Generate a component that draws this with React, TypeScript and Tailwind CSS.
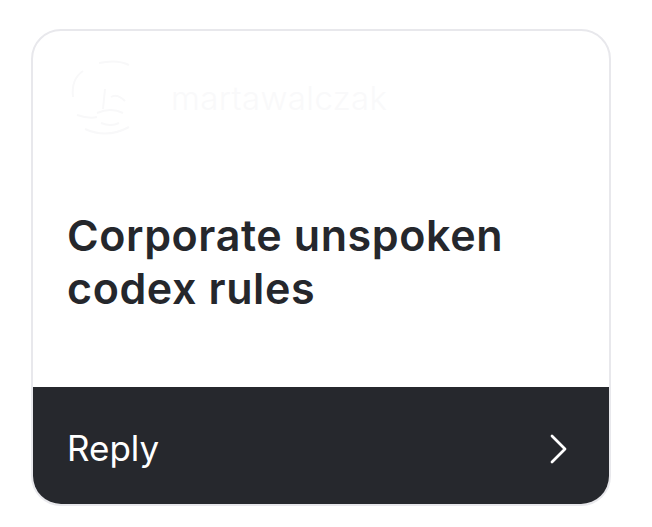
import React from "react";

export default function App() {
  return (
    <div className="min-h-[527px] w-[652px] bg-white pl-[31px] pt-[29px]" style={{ fontFamily: "Inter, 'Noto Sans', sans-serif" }}>
      <div className="flex h-[477px] w-[580px] flex-col overflow-hidden rounded-[30px] border-2 border-[#e8e8ec] bg-white">
        <div className="flex flex-1 flex-col px-[34px]">
          <div className="flex h-[128px] items-center gap-[20px] pt-[8px]">
            <svg width="84" height="84" viewBox="0 0 84 84" fill="none" stroke="#f8f8f9" strokeWidth="2">
              <path d="M32 6 Q50 2 62 8" />
              <path d="M6 40 Q4 22 16 14" />
              <path d="M18 72 Q40 82 62 70" />
              <path d="M38 32 L36 52 M30 56 Q44 50 56 56 M44 40 Q50 36 58 44" />
              <path d="M10 58 Q22 62 30 60" />
              <path d="M34 66 Q44 70 52 66" />
            </svg>
            <span className="text-[33px] font-light tracking-[0.4px] text-[#f9f9fa]">martawalczak</span>
          </div>
          <h1 className="mt-[50px] text-[43px] font-semibold leading-[53px] tracking-[0.6px] text-[#25272c]">
            Corporate unspoken<br />codex rules
          </h1>
        </div>
        <div className="flex h-[117px] items-center justify-between bg-[#26282d] pl-[34px] pr-[40px]">
          <span className="pt-[6px] text-[35px] font-normal text-white">Reply</span>
          <svg width="20" height="32" viewBox="0 0 20 32" fill="none" stroke="white" strokeWidth="2.8" strokeLinecap="round" strokeLinejoin="round" className="mt-[6px]">
            <path d="M3 3 L16 16 L3 29" />
          </svg>
        </div>
      </div>
    </div>
  );
}
